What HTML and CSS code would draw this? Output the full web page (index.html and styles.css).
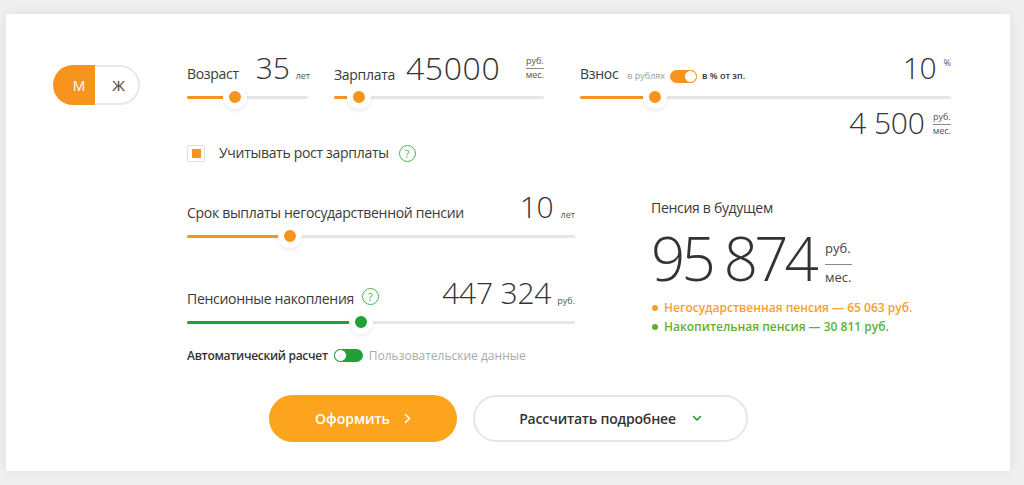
FILE: index.html
```html
<!DOCTYPE html>
<html lang="ru">
<head>
<meta charset="utf-8">
<title>Пенсионный калькулятор</title>
<link rel="stylesheet" href="styles.css">
</head>
<body>
<div class="card">
  <div class="top">
    <div class="gender">
      <span class="g-on">М</span>
      <span class="g-off">Ж</span>
    </div>
    <div class="main">
      <div class="fields">
        <div class="field f-age">
          <div class="head">
            <span class="label">Возраст</span>
            <span class="num num-age">35</span>
            <span class="unit">лет</span>
          </div>
          <div class="slider">
            <div class="track"></div>
            <div class="fill" style="width:48px"></div>
            <div class="thumb" style="left:36px"></div>
          </div>
        </div>
        <div class="field f-salary">
          <div class="head">
            <span class="label">Зарплата</span>
            <span class="num num-salary">45000</span>
            <span class="frac push"><span class="frac-top">руб.</span><span>мес.</span></span>
          </div>
          <div class="slider">
            <div class="track"></div>
            <div class="fill" style="width:25px"></div>
            <div class="thumb" style="left:13px"></div>
          </div>
        </div>
        <div class="field f-vznos">
          <div class="head">
            <span class="label">Взнос</span>
            <span class="tiny muted">в рублях</span>
            <span class="switch switch-orange"><span class="knob"></span></span>
            <span class="tiny strong">в % от зп.</span>
            <span class="num push">10</span>
            <span class="sup">%</span>
          </div>
          <div class="slider">
            <div class="track"></div>
            <div class="fill" style="width:75px"></div>
            <div class="thumb" style="left:63px"></div>
          </div>
          <div class="head head-sub">
            <span class="num">4 500</span>
            <span class="frac frac-sub"><span class="frac-top">руб.</span><span>мес.</span></span>
          </div>
        </div>
      </div>

      <div class="check-row">
        <span class="checkbox"><span class="check-mark"></span></span>
        <span class="label check-text">Учитывать рост зарплаты</span>
        <span class="help">?</span>
      </div>

      <div class="lower">
        <div class="lcol">
          <div class="block">
            <div class="head">
              <span class="label">Срок выплаты негосударственной пенсии</span>
              <span class="num push">10</span>
              <span class="unit unit-r">лет</span>
            </div>
            <div class="slider">
              <div class="track"></div>
              <div class="fill" style="width:103px"></div>
              <div class="thumb" style="left:91px"></div>
            </div>
          </div>
          <div class="block block-2">
            <div class="head">
              <span class="label">Пенсионные накопления</span>
              <span class="help help-2">?</span>
              <span class="num push">447 324</span>
              <span class="unit unit-rub">руб.</span>
            </div>
            <div class="slider slider-green">
              <div class="track"></div>
              <div class="fill" style="width:174px"></div>
              <div class="thumb" style="left:162px"></div>
            </div>
          </div>
          <div class="auto-row">
            <span class="auto-label">Автоматический расчет</span>
            <span class="switch switch-green"><span class="knob"></span></span>
            <span class="auto-alt">Пользовательские данные</span>
          </div>
        </div>
        <div class="rcol">
          <div class="label result-title">Пенсия в будущем</div>
          <div class="result">
            <span class="big">95 874</span>
            <span class="big-frac"><span class="big-frac-top">руб.</span><span>мес.</span></span>
          </div>
          <ul class="legend">
            <li class="legend-orange">Негосударственная пенсия — 65 063 руб.</li>
            <li class="legend-green">Накопительная пенсия — 30 811 руб.</li>
          </ul>
        </div>
      </div>
    </div>
  </div>

  <div class="actions">
    <button class="btn btn-primary">Оформить
      <svg class="chev-right" width="7" height="11" viewBox="0 0 7 11"><path d="M1.5 1.5 L5.5 5.5 L1.5 9.5" fill="none" stroke="#fff" stroke-width="1.6" stroke-linecap="round" stroke-linejoin="round"/></svg>
    </button>
    <button class="btn btn-secondary">Рассчитать подробнее
      <svg class="chev-down" width="10" height="7" viewBox="0 0 10 7"><path d="M1.5 1.5 L5 5 L8.5 1.5" fill="none" stroke="#21a038" stroke-width="1.6" stroke-linecap="round" stroke-linejoin="round"/></svg>
    </button>
  </div>
</div>
</body>
</html>
```

FILE: styles.css
```css
* { box-sizing: border-box; }

html, body {
  margin: 0;
  padding: 0;
}

body {
  background: #efefef;
  font-family: "Open Sans", "Liberation Sans", sans-serif;
  color: #333;
  width: 1024px;
  height: 485px;
  overflow: hidden;
  padding: 14px 0 0 6px;
}

.card {
  width: 1004px;
  height: 457px;
  background: #fff;
  box-shadow: 0 0 10px rgba(0, 0, 0, 0.07);
  display: flex;
  flex-direction: column;
}

.top {
  display: flex;
  padding: 37px 0 0 47px;
}

/* gender toggle */
.gender {
  display: flex;
  margin-top: 14px;
  margin-right: 47px;
  height: 40px;
  flex: none;
}
.g-on {
  width: 42px;
  height: 40px;
  background: #f7941d;
  color: #fff;
  border-radius: 20px 0 0 20px;
  display: flex;
  align-items: center;
  justify-content: center;
  font-size: 14px;
  padding-left: 10px;
}
.g-off {
  width: 45px;
  height: 40px;
  border: 2px solid #e8e8e8;
  border-left: none;
  border-radius: 0 20px 20px 0;
  display: flex;
  align-items: center;
  justify-content: center;
  font-size: 15px;
  color: #444;
  padding-left: 4px;
}

.main {
  width: 764px;
  flex: none;
}

.fields {
  display: flex;
}
.f-age { width: 121px; margin-right: 26px; }
.f-salary { width: 210px; margin-right: 36px; }
.f-vznos { width: 371px; }

.head {
  height: 34px;
  display: flex;
  align-items: baseline;
  white-space: nowrap;
}

.label {
  font-size: 14px;
  line-height: 20px;
  letter-spacing: -0.3px;
  color: #3a3a3a;
}

.num {
  font-size: 30px;
  line-height: 34px;
  font-weight: 300;
  color: #333;
  letter-spacing: -0.2px;
}
.num-age { margin-left: 17px; }
.num-salary {
  margin-left: 11px;
  font-size: 32px;
  letter-spacing: 0.6px;
  font-weight: 350;
}

.push { margin-left: auto; }

.unit {
  font-size: 9px;
  color: #555;
  margin-left: 6px;
}
.unit-r { margin-left: 7px; }
.unit-rub { margin-left: 6px; }

.frac {
  align-self: flex-start;
  margin-top: 5px;
  display: flex;
  flex-direction: column;
  font-size: 9px;
  line-height: 10px;
  color: #555;
  text-align: center;
}
.frac-top {
  border-bottom: 1px solid #8a8a8a;
  padding-bottom: 2px;
  margin-bottom: 1px;
}
.frac-sub { margin-left: 8px; margin-top: 6px; }

.tiny {
  font-size: 9px;
}
.muted { color: #9a9a9a; margin-left: 9px; }
.strong { color: #333; font-weight: 600; margin-left: 5px; }

.sup {
  align-self: flex-start;
  margin-top: 5px;
  margin-left: 7px;
  font-size: 9px;
  color: #555;
}

.head-sub {
  justify-content: flex-end;
  margin-top: -3px;
}

/* switches */
.switch {
  width: 27px;
  height: 13px;
  border-radius: 7px;
  display: flex;
  align-items: center;
  margin-left: 5px;
  flex: none;
}
.switch .knob {
  width: 13px;
  height: 13px;
  border-radius: 50%;
  background: #fff;
}
.switch-orange {
  align-self: flex-start;
  margin-top: 19px;
  background: #f7941d;
  justify-content: flex-end;
}
.switch-orange .knob { border: 1.5px solid #f7941d; }
.switch-green {
  background: #21a038;
  justify-content: flex-start;
  width: 29px;
  margin-left: 6px;
}
.switch-green .knob { border: 1.5px solid #21a038; }

/* sliders */
.slider {
  position: relative;
  height: 24px;
}
.track {
  position: absolute;
  left: 0;
  right: 0;
  top: 11px;
  height: 3px;
  background: #e6e6e6;
  border-radius: 2px;
}
.fill {
  position: absolute;
  left: 0;
  top: 11px;
  height: 3px;
  background: #f7941d;
  border-radius: 2px;
}
.thumb {
  position: absolute;
  top: 0;
  width: 24px;
  height: 24px;
  border-radius: 50%;
  background: #f7941d;
  border: 6px solid #fff;
  box-shadow: 0 2px 4px rgba(0, 0, 0, 0.08);
}
.slider-green .fill { background: #21a038; }
.slider-green .thumb { background: #21a038; }

/* checkbox row */
.check-row {
  margin-top: 4px;
  height: 18px;
  display: flex;
  align-items: center;
}
.checkbox {
  width: 18px;
  height: 17px;
  border: 1px solid #e0e0e0;
  border-radius: 2px;
  display: flex;
  align-items: center;
  justify-content: center;
}
.check-mark {
  width: 9px;
  height: 9px;
  background: #f7941d;
}
.check-text {
  margin-left: 14px;
}
.help {
  width: 17px;
  height: 17px;
  border: 1px solid #4caf50;
  border-radius: 50%;
  color: #4caf50;
  font-size: 11px;
  display: inline-flex;
  align-items: center;
  justify-content: center;
  margin-left: 10px;
  flex: none;
}
.help-2 {
  align-self: center;
  margin-left: 8px;
  margin-top: 6px;
}

/* lower */
.lower {
  display: flex;
  margin-top: 28px;
}
.lcol { width: 388px; flex: none; }
.block-2 { margin-top: 28px; }

.auto-row {
  margin-top: 12px;
  height: 18px;
  display: flex;
  align-items: center;
  white-space: nowrap;
}
.auto-label {
  font-size: 12px;
  letter-spacing: -0.3px;
  font-weight: 600;
  color: #333;
}
.auto-alt {
  margin-left: 6px;
  font-size: 12px;
  color: #aaa;
}

.rcol {
  margin-left: 76px;
}
.result-title {
  margin-top: 8px;
}
.result {
  margin-top: 10px;
  display: flex;
  align-items: flex-start;
  height: 60px;
}
.big {
  font-size: 60px;
  line-height: 60px;
  font-weight: 300;
  color: #333;
  letter-spacing: -3.8px;
}
.big-frac {
  margin-left: 10px;
  margin-top: 12px;
  display: flex;
  flex-direction: column;
  font-size: 13px;
  line-height: 16px;
  color: #444;
}
.big-frac-top {
  border-bottom: 1px solid #8a8a8a;
  padding-bottom: 8px;
  margin-bottom: 4px;
}

.legend {
  list-style: none;
  margin: 10px 0 0;
  padding: 0;
}
.legend li {
  font-size: 12px;
  line-height: 19px;
  font-weight: 600;
  display: flex;
  align-items: center;
  white-space: nowrap;
}
.legend li::before {
  content: "";
  width: 6px;
  height: 6px;
  border-radius: 50%;
  margin-right: 6px;
  margin-left: 1px;
}
.legend-orange { color: #f7a030; }
.legend-orange::before { background: #f7a030; }
.legend-green { color: #5fb12e; }
.legend-green::before { background: #5fb12e; }

/* actions */
.actions {
  margin-top: 31px;
  display: flex;
  justify-content: center;
  gap: 16px;
  padding-left: 1px;
}
.btn {
  height: 47px;
  border-radius: 24px;
  font-family: inherit;
  font-size: 14px;
  font-weight: 600;
  display: flex;
  align-items: center;
  justify-content: center;
  cursor: pointer;
}
.btn-primary {
  width: 188px;
  background: #fca41d;
  border: none;
  color: #fff;
}
.chev-right { margin-left: 14px; }
.btn-secondary {
  width: 275px;
  background: #fff;
  border: 2px solid #e6e6e6;
  color: #333;
  letter-spacing: -0.2px;
}
.chev-down { margin-left: 16px; }
```
